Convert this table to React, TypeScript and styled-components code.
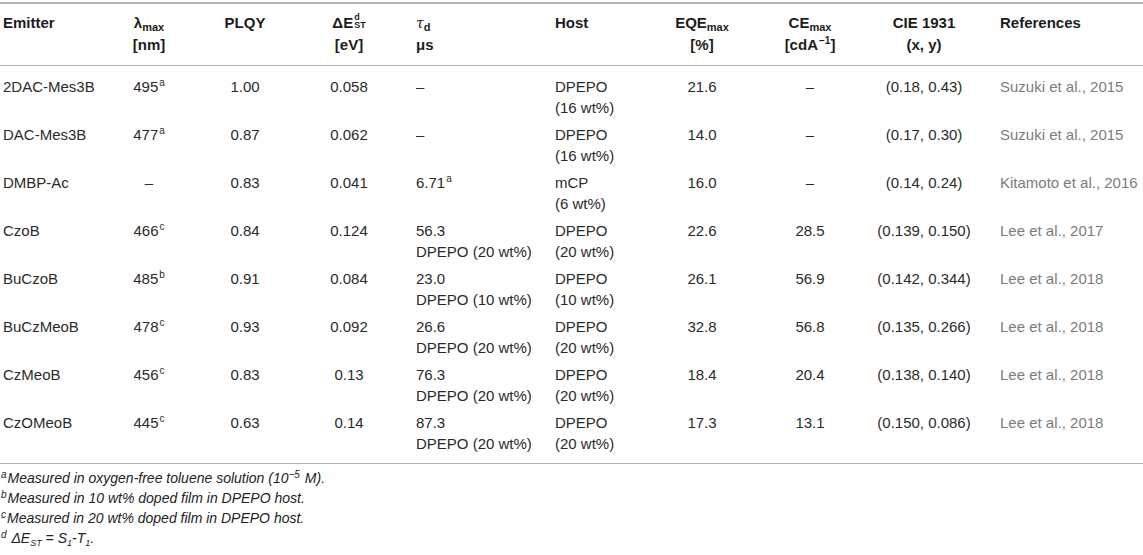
import React from "react";
import styled, { createGlobalStyle } from "styled-components";

const Global = createGlobalStyle`
  html, body { margin: 0; padding: 0; background: #fff; }
  body { font-family: "Liberation Sans", Arial, sans-serif; color: #2a2a2a; }
`;

const Wrap = styled.div`
  padding-top: 2px;
  width: 1143px;
`;

const COLS = "128px 42px 150px 58px 174px 98px 104px 112px 116px 1fr";

const HeadRow = styled.div`
  display: grid;
  grid-template-columns: ${COLS};
  border-top: 2px solid #b4b4b4;
  border-bottom: 1px solid #b4b4b4;
  padding: 8px 0 9px;
  font-weight: bold;
  color: #1c1c1c;
  font-size: 15px;
  line-height: 22px;
`;

const Body = styled.div`
  padding: 7px 0 6px;
  border-bottom: 1px solid #b4b4b4;
`;

const Row = styled.div`
  display: grid;
  grid-template-columns: ${COLS};
  padding: 3px 0;
  font-size: 15px;
  line-height: 21px;
`;

const Cell = styled.div<{ $align?: "left" | "center"; $pl?: number; $muted?: boolean }>`
  text-align: ${(p) => p.$align || "left"};
  padding: 0 0 0 ${(p) => (p.$pl ?? (p.$align === "center" ? 0 : 3))}px;
  color: ${(p) => (p.$muted ? "#7c7c7c" : "inherit")};
  white-space: nowrap;
`;

const HeadCell = styled(Cell)`
  height: 44px;
`;

const Sup = styled.sup`
  font-size: 10px;
  line-height: 0;
  vertical-align: 6px;
  margin-left: 1px;
`;

const Sub = styled.sub`
  font-size: 11px;
  line-height: 0;
  vertical-align: -3px;
`;

const Stack = styled.span`
  display: inline-flex;
  flex-direction: column;
  font-size: 9px;
  line-height: 8px;
  height: 16px;
  vertical-align: 8px;
  margin-left: 1px;
  margin-top: -10px;
  text-align: left;
`;

const Tau = styled.span`
  font-style: italic;
  font-weight: normal;
  font-family: "DejaVu Serif", serif;
  font-size: 14px;
  line-height: 0;
`;

const Notes = styled.div`
  padding-top: 4px;
  font-size: 14px;
  line-height: 20px;
  font-style: italic;
  color: #222;
`;

const Note = styled.div`
  padding-left: 1px;
`;

const NoteMark = styled.sup`
  font-size: 10px;
  line-height: 0;
  vertical-align: 5px;
  margin-right: 1px;
`;

const NoteSub = styled.sub`
  font-size: 9px;
  line-height: 0;
  vertical-align: -3px;
`;

type RowData = {
  emitter: string;
  lambda: string;
  lsup?: string;
  plqy: string;
  de: string;
  tau: string[];
  tsup?: string;
  host: string[];
  eqe: string;
  ce: string;
  cie: string;
  ref: string;
};

const rows: RowData[] = [
  { emitter: "2DAC-Mes3B", lambda: "495", lsup: "a", plqy: "1.00", de: "0.058", tau: ["–"], host: ["DPEPO", "(16 wt%)"], eqe: "21.6", ce: "–", cie: "(0.18, 0.43)", ref: "Suzuki et al., 2015" },
  { emitter: "DAC-Mes3B", lambda: "477", lsup: "a", plqy: "0.87", de: "0.062", tau: ["–"], host: ["DPEPO", "(16 wt%)"], eqe: "14.0", ce: "–", cie: "(0.17, 0.30)", ref: "Suzuki et al., 2015" },
  { emitter: "DMBP-Ac", lambda: "–", plqy: "0.83", de: "0.041", tau: ["6.71"], tsup: "a", host: ["mCP", "(6 wt%)"], eqe: "16.0", ce: "–", cie: "(0.14, 0.24)", ref: "Kitamoto et al., 2016" },
  { emitter: "CzoB", lambda: "466", lsup: "c", plqy: "0.84", de: "0.124", tau: ["56.3", "DPEPO (20 wt%)"], host: ["DPEPO", "(20 wt%)"], eqe: "22.6", ce: "28.5", cie: "(0.139, 0.150)", ref: "Lee et al., 2017" },
  { emitter: "BuCzoB", lambda: "485", lsup: "b", plqy: "0.91", de: "0.084", tau: ["23.0", "DPEPO (10 wt%)"], host: ["DPEPO", "(10 wt%)"], eqe: "26.1", ce: "56.9", cie: "(0.142, 0.344)", ref: "Lee et al., 2018" },
  { emitter: "BuCzMeoB", lambda: "478", lsup: "c", plqy: "0.93", de: "0.092", tau: ["26.6", "DPEPO (20 wt%)"], host: ["DPEPO", "(20 wt%)"], eqe: "32.8", ce: "56.8", cie: "(0.135, 0.266)", ref: "Lee et al., 2018" },
  { emitter: "CzMeoB", lambda: "456", lsup: "c", plqy: "0.83", de: "0.13", tau: ["76.3", "DPEPO (20 wt%)"], host: ["DPEPO", "(20 wt%)"], eqe: "18.4", ce: "20.4", cie: "(0.138, 0.140)", ref: "Lee et al., 2018" },
  { emitter: "CzOMeoB", lambda: "445", lsup: "c", plqy: "0.63", de: "0.14", tau: ["87.3", "DPEPO (20 wt%)"], host: ["DPEPO", "(20 wt%)"], eqe: "17.3", ce: "13.1", cie: "(0.150, 0.086)", ref: "Lee et al., 2018" },
];

const Lines: React.FC<{ lines: string[]; sup?: string }> = ({ lines, sup }) => (
  <>
    {lines.map((l, i) => (
      <React.Fragment key={i}>
        {i > 0 && <br />}
        {l}
        {i === 0 && sup && <Sup>{sup}</Sup>}
      </React.Fragment>
    ))}
  </>
);

export default function App() {
  return (
    <Wrap>
      <Global />
      <HeadRow>
        <HeadCell>Emitter</HeadCell>
        <HeadCell $align="center">
          λ<Sub>max</Sub>
          <br />[nm]
        </HeadCell>
        <HeadCell $align="center">PLQY</HeadCell>
        <HeadCell $align="center">
          ΔE
          <Stack>
            <span>d</span>
            <span>ST</span>
          </Stack>
          <br />[eV]
        </HeadCell>
        <HeadCell $pl={38}>
          <Tau>τ</Tau>
          <Sub>d</Sub>
          <br />μs
        </HeadCell>
        <HeadCell>Host</HeadCell>
        <HeadCell $align="center">
          EQE<Sub>max</Sub>
          <br />[%]
        </HeadCell>
        <HeadCell $align="center">
          CE<Sub>max</Sub>
          <br />[cdA<Sup>−1</Sup>]
        </HeadCell>
        <HeadCell $align="center">
          CIE 1931
          <br />(x, y)
        </HeadCell>
        <HeadCell $pl={18}>References</HeadCell>
      </HeadRow>
      <Body>
        {rows.map((r) => (
          <Row key={r.emitter}>
            <Cell>{r.emitter}</Cell>
            <Cell $align="center">
              {r.lambda}
              {r.lsup && <Sup>{r.lsup}</Sup>}
            </Cell>
            <Cell $align="center">{r.plqy}</Cell>
            <Cell $align="center">{r.de}</Cell>
            <Cell $pl={38}>
              <Lines lines={r.tau} sup={r.tsup} />
            </Cell>
            <Cell>
              <Lines lines={r.host} />
            </Cell>
            <Cell $align="center">{r.eqe}</Cell>
            <Cell $align="center">{r.ce}</Cell>
            <Cell $align="center">{r.cie}</Cell>
            <Cell $pl={18} $muted>
              {r.ref}
            </Cell>
          </Row>
        ))}
      </Body>
      <Notes>
        <Note>
          <NoteMark>a</NoteMark>Measured in oxygen-free toluene solution (10<NoteMark>−5</NoteMark> M).
        </Note>
        <Note>
          <NoteMark>b</NoteMark>Measured in 10 wt% doped film in DPEPO host.
        </Note>
        <Note>
          <NoteMark>c</NoteMark>Measured in 20 wt% doped film in DPEPO host.
        </Note>
        <Note>
          <NoteMark>d</NoteMark> ΔE<NoteSub>ST</NoteSub> = S<NoteSub>1</NoteSub>-T<NoteSub>1</NoteSub>.
        </Note>
      </Notes>
    </Wrap>
  );
}
